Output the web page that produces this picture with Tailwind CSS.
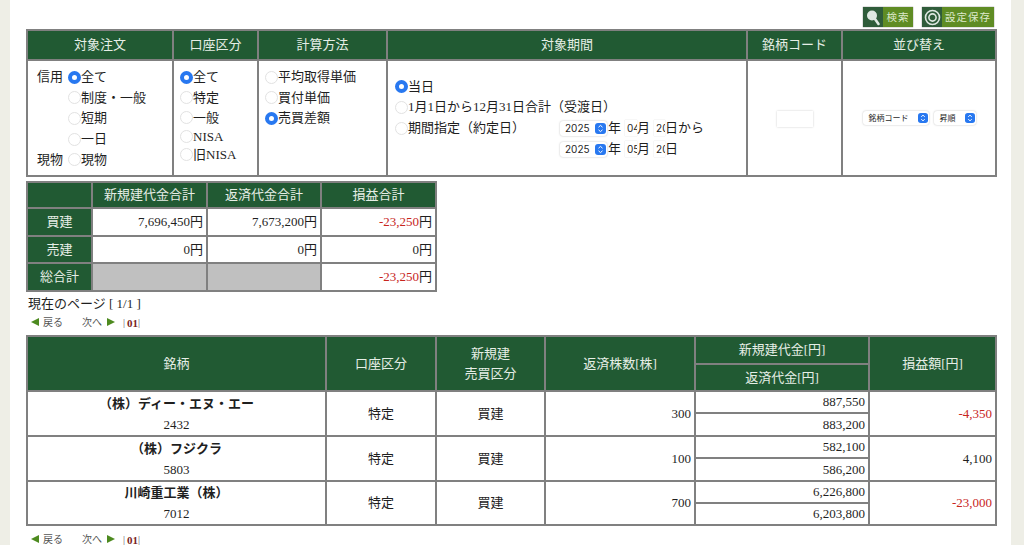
<!DOCTYPE html>
<html lang="ja">
<head>
    <meta charset="UTF-8">
    <meta name="viewport" content="width=device-width, initial-scale=1.0">
    <title>譲渡益税</title>
    <script src="https://cdn.jsdelivr.net/npm/@tailwindcss/browser@4"></script>
</head>
<body class="bg-white h-[545px] overflow-hidden font-['Liberation_Serif','Noto_Sans_CJK_JP',serif] text-[13px] leading-[16px] text-[#1f1f1f]">
<div class="flex h-[545px]">
    <div class="w-[10px] bg-[#eeeee6]"></div>
    <div class="w-[1001px] pl-4 bg-white overflow-hidden">

        <!-- buttons -->
        <div class="w-[969px] h-[29px] pt-[7px] pr-[1px] flex justify-end gap-[9px]">
            <a class="flex h-[20px] w-[50px] text-[#dde9cb] text-[10.5px] font-['Noto_Sans_CJK_JP',sans-serif] tracking-[1px] shadow-[0_0_1px_#555]">
                <span class="w-[20px] bg-[#2f5c3a] flex items-center justify-center">
                    <svg width="16" height="17" viewBox="0 0 16 17"><circle cx="7" cy="6.5" r="5" fill="#dfe8e2"/><path d="M10 10l3.5 5" stroke="#dfe8e2" stroke-width="2.6" stroke-linecap="round"/></svg>
                </span>
                <span class="flex-1 bg-[#5f8c24] flex items-center justify-center">検索</span>
            </a>
            <a class="flex h-[20px] w-[72px] text-[#dde9cb] text-[10.5px] font-['Noto_Sans_CJK_JP',sans-serif] tracking-[1px] shadow-[0_0_1px_#555]">
                <span class="w-[20px] bg-[#2f5c3a] flex items-center justify-center">
                    <svg width="17" height="17" viewBox="0 0 17 17"><circle cx="8.5" cy="8.5" r="7" fill="none" stroke="#dfe8e2" stroke-width="1.6"/><circle cx="8.5" cy="8.5" r="3.6" fill="none" stroke="#dfe8e2" stroke-width="1.6"/></svg>
                </span>
                <span class="flex-1 bg-[#5f8c24] flex items-center justify-center">設定保存</span>
            </a>
        </div>

        <!-- search conditions -->
        <table class="w-[969px] table-fixed border-collapse border-2 border-[#808080]">
            <colgroup>
                <col class="w-[146px]"><col class="w-[85px]"><col class="w-[129px]"><col class="w-[360px]"><col class="w-[95px]"><col class="w-[154px]">
            </colgroup>
            <thead>
                <tr class="h-[30px] bg-[#215a33] text-[#e6eee6] text-center">
                    <th class="font-normal border-2 border-[#808080]">対象注文</th>
                    <th class="font-normal border-2 border-[#808080]">口座区分</th>
                    <th class="font-normal border-2 border-[#808080]">計算方法</th>
                    <th class="font-normal border-2 border-[#808080]">対象期間</th>
                    <th class="font-normal border-2 border-[#808080]">銘柄コード</th>
                    <th class="font-normal border-2 border-[#808080]">並び替え</th>
                </tr>
            </thead>
            <tbody>
                <tr class="h-[116px]">
                    <td class="border-2 border-[#808080] pl-[9px] align-top pt-[6px]">
                        <div class="grid grid-cols-[31px_1fr] auto-rows-[20.6px] items-center">
                            <span>信用</span><label class="flex items-center"><input type="radio" name="o" checked class="appearance-none w-[13px] h-[13px] rounded-full bg-white border border-[#e2e2e2] checked:border-[4px] checked:border-[#2878f0]">全て</label>
                            <span></span><label class="flex items-center"><input type="radio" name="o" class="appearance-none w-[13px] h-[13px] rounded-full bg-white border border-[#e2e2e2]">制度・一般</label>
                            <span></span><label class="flex items-center"><input type="radio" name="o" class="appearance-none w-[13px] h-[13px] rounded-full bg-white border border-[#e2e2e2]">短期</label>
                            <span></span><label class="flex items-center"><input type="radio" name="o" class="appearance-none w-[13px] h-[13px] rounded-full bg-white border border-[#e2e2e2]">一日</label>
                            <span>現物</span><label class="flex items-center"><input type="radio" name="o" class="appearance-none w-[13px] h-[13px] rounded-full bg-white border border-[#e2e2e2]">現物</label>
                        </div>
                    </td>
                    <td class="border-2 border-[#808080] pl-[6px] align-top pt-[6px]">
                        <label class="flex items-center h-[20.6px]"><input type="radio" name="a" checked class="appearance-none w-[13px] h-[13px] rounded-full bg-white border border-[#e2e2e2] checked:border-[4px] checked:border-[#2878f0]">全て</label>
                        <label class="flex items-center h-[20.6px]"><input type="radio" name="a" class="appearance-none w-[13px] h-[13px] rounded-full bg-white border border-[#e2e2e2]">特定</label>
                        <label class="flex items-center h-[19.6px]"><input type="radio" name="a" class="appearance-none w-[13px] h-[13px] rounded-full bg-white border border-[#e2e2e2]">一般</label>
                        <label class="flex items-center h-[17.6px]"><input type="radio" name="a" class="appearance-none w-[13px] h-[13px] rounded-full bg-white border border-[#e2e2e2]">NISA</label>
                        <label class="flex items-center h-[19px]"><input type="radio" name="a" class="appearance-none w-[13px] h-[13px] rounded-full bg-white border border-[#e2e2e2]">旧NISA</label>
                    </td>
                    <td class="border-2 border-[#808080] pl-[6px] align-top pt-[6px]">
                        <label class="flex items-center h-[20.6px]"><input type="radio" name="c" class="appearance-none w-[13px] h-[13px] rounded-full bg-white border border-[#e2e2e2]">平均取得単価</label>
                        <label class="flex items-center h-[20.6px]"><input type="radio" name="c" class="appearance-none w-[13px] h-[13px] rounded-full bg-white border border-[#e2e2e2]">買付単価</label>
                        <label class="flex items-center h-[20.6px]"><input type="radio" name="c" checked class="appearance-none w-[13px] h-[13px] rounded-full bg-white border border-[#e2e2e2] checked:border-[4px] checked:border-[#2878f0]">売買差額</label>
                    </td>
                    <td class="border-2 border-[#808080] pl-[7px]">
                        <label class="flex items-center h-[20.5px]"><input type="radio" name="p" checked class="appearance-none w-[13px] h-[13px] rounded-full bg-white border border-[#e2e2e2] checked:border-[4px] checked:border-[#2878f0]">当日</label>
                        <label class="flex items-center h-[20.5px]"><input type="radio" name="p" class="appearance-none w-[13px] h-[13px] rounded-full bg-white border border-[#e2e2e2]">1月1日から12月31日合計（受渡日）</label>
                        <div class="flex h-[42px]">
                            <label class="flex items-center h-[21px] w-[165px]"><input type="radio" name="p" class="appearance-none w-[13px] h-[13px] rounded-full bg-white border border-[#e2e2e2]">期間指定（約定日）</label>
                            <div>
                                <div class="flex items-center h-[21px]">
                                    <span class="relative w-[47px] h-[15px] rounded-[3px] bg-white shadow-[0_0_2px_#bbb] text-[10px] leading-[15px] font-['Inter',sans-serif] pl-[5px] mr-[1px]">2025<svg class="absolute right-[1px] top-[2px]" width="11" height="11" viewBox="0 0 11 11"><rect width="11" height="11" rx="3" fill="#2878f0"/><path d="M3.5 4.2L5.5 2.4L7.5 4.2M3.5 6.8L5.5 8.6L7.5 6.8" fill="none" stroke="#fff" stroke-width="1"/></svg></span>
                                    <span>年</span><input type="text" value="04" class="w-[12px] h-[16px] ml-[4px] shadow-[0_0_1px_#ccc] text-[10px] font-['Inter',sans-serif] pl-[2px]"><span>月</span><input type="text" value="20" class="w-[11px] h-[16px] ml-[4px] shadow-[0_0_1px_#ccc] text-[10px] font-['Inter',sans-serif] pl-[2px]"><span>日から</span>
                                </div>
                                <div class="flex items-center h-[21px]">
                                    <span class="relative w-[47px] h-[15px] rounded-[3px] bg-white shadow-[0_0_2px_#bbb] text-[10px] leading-[15px] font-['Inter',sans-serif] pl-[5px] mr-[1px]">2025<svg class="absolute right-[1px] top-[2px]" width="11" height="11" viewBox="0 0 11 11"><rect width="11" height="11" rx="3" fill="#2878f0"/><path d="M3.5 4.2L5.5 2.4L7.5 4.2M3.5 6.8L5.5 8.6L7.5 6.8" fill="none" stroke="#fff" stroke-width="1"/></svg></span>
                                    <span>年</span><input type="text" value="05" class="w-[12px] h-[16px] ml-[4px] shadow-[0_0_1px_#ccc] text-[10px] font-['Inter',sans-serif] pl-[2px]"><span>月</span><input type="text" value="20" class="w-[11px] h-[16px] ml-[4px] shadow-[0_0_1px_#ccc] text-[10px] font-['Inter',sans-serif] pl-[2px]"><span>日</span>
                                </div>
                            </div>
                        </div>
                    </td>
                    <td class="border-2 border-[#808080] text-center">
                        <input type="text" class="w-[36px] h-[16px] bg-white shadow-[0_0_2px_#ccc] align-middle">
                    </td>
                    <td class="border-2 border-[#808080]">
                        <div class="flex justify-center gap-[5px] font-['Noto_Sans_CJK_JP',sans-serif] text-[8px] leading-[14px]">
                            <span class="relative w-[66px] h-[14px] rounded-[3px] bg-white shadow-[0_0_2px_#bbb] pl-[6px]">銘柄コード<svg class="absolute right-[1px] top-[2px]" width="10" height="10" viewBox="0 0 11 11"><rect width="11" height="11" rx="3" fill="#2878f0"/><path d="M3.5 4.2L5.5 2.4L7.5 4.2M3.5 6.8L5.5 8.6L7.5 6.8" fill="none" stroke="#fff" stroke-width="1"/></svg></span>
                            <span class="relative w-[42px] h-[14px] rounded-[3px] bg-white shadow-[0_0_2px_#bbb] pl-[6px]">昇順<svg class="absolute right-[1px] top-[2px]" width="10" height="10" viewBox="0 0 11 11"><rect width="11" height="11" rx="3" fill="#2878f0"/><path d="M3.5 4.2L5.5 2.4L7.5 4.2M3.5 6.8L5.5 8.6L7.5 6.8" fill="none" stroke="#fff" stroke-width="1"/></svg></span>
                        </div>
                    </td>
                </tr>
            </tbody>
        </table>

        <!-- totals -->
        <table class="mt-[4px] w-[409px] table-fixed border-collapse border-2 border-[#808080]">
            <colgroup>
                <col class="w-[65px]"><col class="w-[115px]"><col class="w-[114px]"><col class="w-[115px]">
            </colgroup>
            <tbody class="text-right">
                <tr class="h-[26px] bg-[#215a33] text-[#e6eee6] text-center">
                    <th class="font-normal border-2 border-[#808080]"></th>
                    <th class="font-normal border-2 border-[#808080]">新規建代金合計</th>
                    <th class="font-normal border-2 border-[#808080]">返済代金合計</th>
                    <th class="font-normal border-2 border-[#808080]">損益合計</th>
                </tr>
                <tr class="h-[28px]">
                    <th class="font-normal border-2 border-[#808080] bg-[#215a33] text-[#e6eee6] text-center">買建</th>
                    <td class="border-2 border-[#808080] pr-[3px]">7,696,450円</td>
                    <td class="border-2 border-[#808080] pr-[3px]">7,673,200円</td>
                    <td class="border-2 border-[#808080] pr-[3px]"><span class="text-[#c8261e]">-23,250</span>円</td>
                </tr>
                <tr class="h-[27px]">
                    <th class="font-normal border-2 border-[#808080] bg-[#215a33] text-[#e6eee6] text-center">売建</th>
                    <td class="border-2 border-[#808080] pr-[3px]">0円</td>
                    <td class="border-2 border-[#808080] pr-[3px]">0円</td>
                    <td class="border-2 border-[#808080] pr-[3px]">0円</td>
                </tr>
                <tr class="h-[28px]">
                    <th class="font-normal border-2 border-[#808080] bg-[#215a33] text-[#e6eee6] text-center">総合計</th>
                    <td class="border-2 border-[#808080] bg-[#c0c0c0]"></td>
                    <td class="border-2 border-[#808080] bg-[#c0c0c0]"></td>
                    <td class="border-2 border-[#808080] pr-[3px]"><span class="text-[#c8261e]">-23,250</span>円</td>
                </tr>
            </tbody>
        </table>

        <p class="mt-[4px] pl-[2px] h-[16px]">現在のページ [ 1/1 ]</p>
        <div class="mt-[3px] pl-[5px] h-[15px] flex items-center text-[10px] text-[#555]">
            <span class="w-0 h-0 border-y-[4px] border-y-transparent border-r-[8px] border-r-[#4d8a1f] mb-[2px]"></span>
            <span class="ml-[4px]">戻る</span>
            <span class="ml-[19px]">次へ</span>
            <span class="ml-[5px] w-0 h-0 border-y-[4px] border-y-transparent border-l-[8px] border-l-[#4d8a1f] mb-[2px]"></span>
            <span class="ml-[8px]">|</span><b class="ml-[2px] text-[11px] text-[#7a1c1c]">01</b><span>|</span>
        </div>

        <!-- results -->
        <table class="mt-[5px] w-[969px] table-fixed border-collapse border-2 border-[#808080]">
            <colgroup>
                <col class="w-[299px]"><col class="w-[110px]"><col class="w-[109px]"><col class="w-[150px]"><col class="w-[174px]"><col class="w-[127px]">
            </colgroup>
            <thead class="bg-[#215a33] text-[#e6eee6] text-center">
                <tr class="h-[28px]">
                    <th rowspan="2" class="font-normal border-2 border-[#808080]">銘柄</th>
                    <th rowspan="2" class="font-normal border-2 border-[#808080]">口座区分</th>
                    <th rowspan="2" class="font-normal border-2 border-[#808080] leading-[20px]">新規建<br>売買区分</th>
                    <th rowspan="2" class="font-normal border-2 border-[#808080]">返済株数[株]</th>
                    <th class="font-normal border-2 border-[#808080]">新規建代金[円]</th>
                    <th rowspan="2" class="font-normal border-2 border-[#808080]">損益額[円]</th>
                </tr>
                <tr class="h-[27px]">
                    <th class="font-normal border-2 border-[#808080]">返済代金[円]</th>
                </tr>
            </thead>
            <tbody>
                <tr class="h-[22px]">
                    <td rowspan="2" class="border-2 border-[#808080] text-center leading-[21px]"><b>（株）ディー・エヌ・エー</b><br>2432</td>
                    <td rowspan="2" class="border-2 border-[#808080] text-center">特定</td>
                    <td rowspan="2" class="border-2 border-[#808080] text-center">買建</td>
                    <td rowspan="2" class="border-2 border-[#808080] text-right pr-[3px]">300</td>
                    <td class="border-2 border-[#808080] text-right pr-[3px]">887,550</td>
                    <td rowspan="2" class="border-2 border-[#808080] text-right pr-[3px] text-[#c8261e]">-4,350</td>
                </tr>
                <tr class="h-[23px]"><td class="border-2 border-[#808080] text-right pr-[3px]">883,200</td></tr>
                <tr class="h-[22px]">
                    <td rowspan="2" class="border-2 border-[#808080] text-center leading-[21px]"><b>（株）フジクラ</b><br>5803</td>
                    <td rowspan="2" class="border-2 border-[#808080] text-center">特定</td>
                    <td rowspan="2" class="border-2 border-[#808080] text-center">買建</td>
                    <td rowspan="2" class="border-2 border-[#808080] text-right pr-[3px]">100</td>
                    <td class="border-2 border-[#808080] text-right pr-[3px]">582,100</td>
                    <td rowspan="2" class="border-2 border-[#808080] text-right pr-[3px]">4,100</td>
                </tr>
                <tr class="h-[23px]"><td class="border-2 border-[#808080] text-right pr-[3px]">586,200</td></tr>
                <tr class="h-[22px]">
                    <td rowspan="2" class="border-2 border-[#808080] text-center leading-[21px]"><b>川崎重工業（株）</b><br>7012</td>
                    <td rowspan="2" class="border-2 border-[#808080] text-center">特定</td>
                    <td rowspan="2" class="border-2 border-[#808080] text-center">買建</td>
                    <td rowspan="2" class="border-2 border-[#808080] text-right pr-[3px]">700</td>
                    <td class="border-2 border-[#808080] text-right pr-[3px]">6,226,800</td>
                    <td rowspan="2" class="border-2 border-[#808080] text-right pr-[3px] text-[#c8261e]">-23,000</td>
                </tr>
                <tr class="h-[22px]"><td class="border-2 border-[#808080] text-right pr-[3px]">6,203,800</td></tr>
            </tbody>
        </table>

        <div class="mt-[6px] pl-[5px] h-[15px] flex items-center text-[10px] text-[#555]">
            <span class="w-0 h-0 border-y-[4px] border-y-transparent border-r-[8px] border-r-[#4d8a1f] mb-[2px]"></span>
            <span class="ml-[4px]">戻る</span>
            <span class="ml-[19px]">次へ</span>
            <span class="ml-[5px] w-0 h-0 border-y-[4px] border-y-transparent border-l-[8px] border-l-[#4d8a1f] mb-[2px]"></span>
            <span class="ml-[8px]">|</span><b class="ml-[2px] text-[11px] text-[#7a1c1c]">01</b><span>|</span>
        </div>
    </div>
    <div class="w-[13px] bg-[#eeeee6]"></div>
</div>
</body>
</html>
